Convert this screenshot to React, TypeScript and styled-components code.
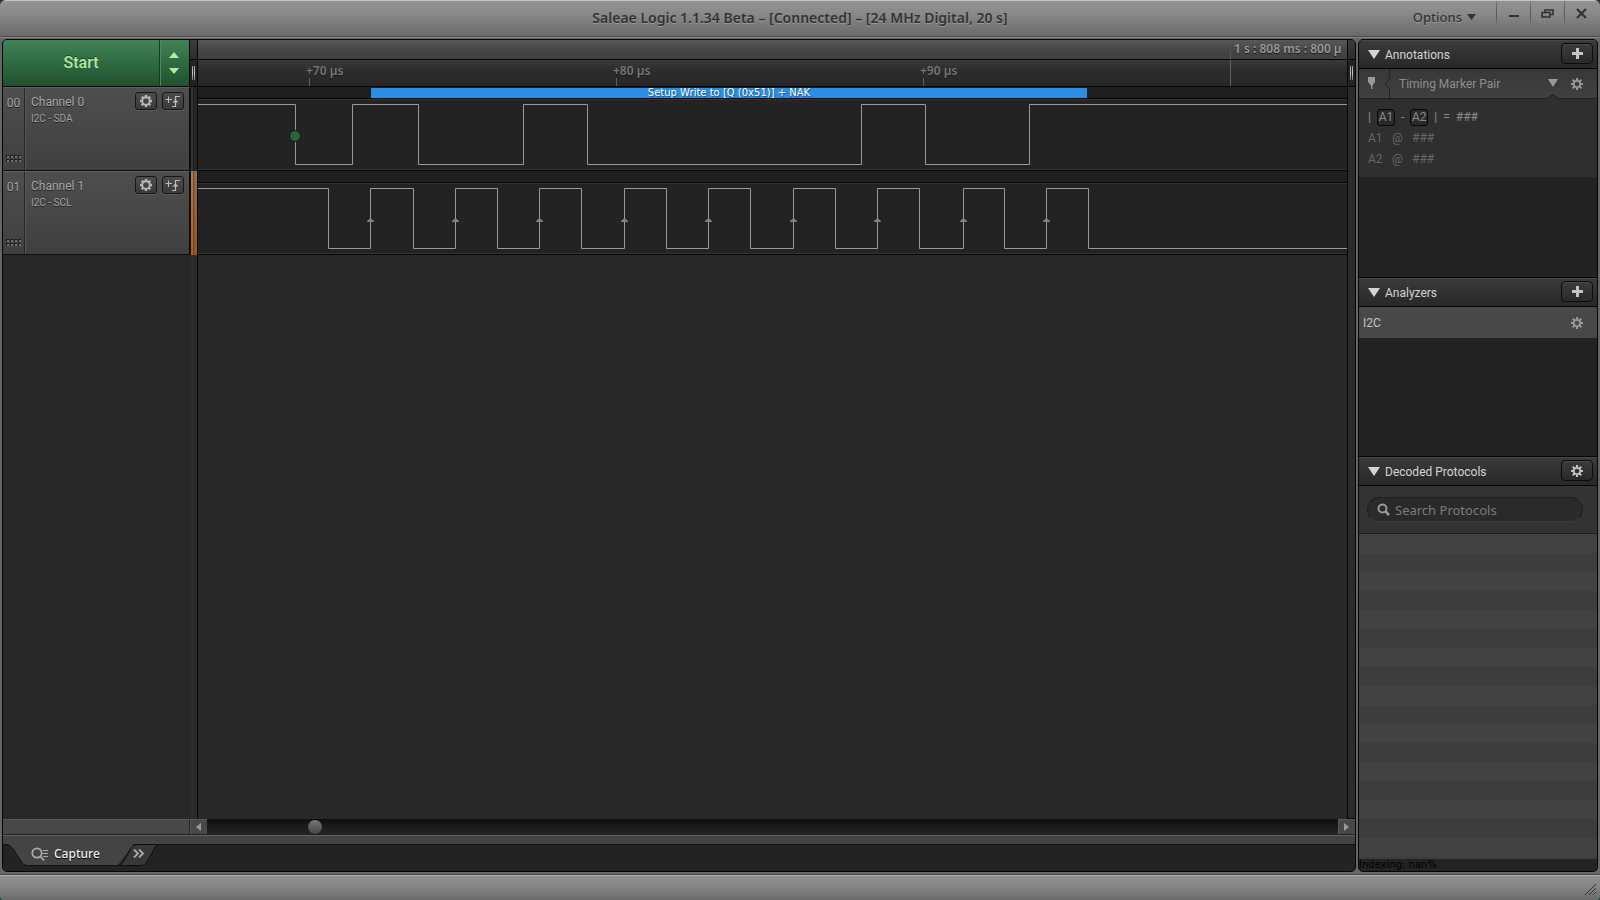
import React from "react";
import styled, { createGlobalStyle, css } from "styled-components";

const ui = `Roboto, "Liberation Sans", sans-serif`;
const humanist = `"Noto Sans", "Open Sans", sans-serif`;
const wide = `"DejaVu Sans", sans-serif`;

const Global = createGlobalStyle`
  *, *::before, *::after { box-sizing: border-box; }
  html, body { margin: 0; height: 100%; background: #12402f; }
  #root { height: 100%; }
  button, input { font: inherit; color: inherit; }
  button { margin: 0; padding: 0; border: 0; background: none; cursor: default; }
  h1, h2, p { margin: 0; font-weight: 400; }
  svg { display: block; }
`;

const Window = styled.div`
  height: 100vh;
  min-height: 600px;
  display: flex;
  flex-direction: column;
  background: #666;
  border-radius: 6px 6px 4px 4px;
  overflow: hidden;
  font: 12px/16px ${ui};
  color: #aaa;
`;

/* ---------- title bar ---------- */

const TitleBar = styled.header`
  flex: none;
  height: 37px;
  display: grid;
  grid-template-columns: 1fr auto 1fr;
  border-top: 1px solid #bfc4c0;
  border-bottom: 1px solid #4c4c4c;
  background: linear-gradient(#949494, #888 40%, #696969);
`;

const Title = styled.h1`
  grid-column: 2;
  font: 600 14px/18px ${humanist};
  padding-top: 8px;
  color: #333;
  text-shadow: 0 1px 0 #999;
`;

const WindowTools = styled.div`
  display: flex;
  justify-content: flex-end;
  padding-right: 2px;
`;

const OptionsButton = styled.button`
  height: 32px;
  display: flex;
  align-items: center;
  gap: 5px;
  margin-right: 20px;
  font: 500 13px/18px ${humanist};
  color: #333;
  text-shadow: 0 1px 0 #999;
`;

const WindowButton = styled.button`
  width: 34px;
  height: 24px;
  display: flex;
  align-items: center;
  justify-content: center;
  color: #333;
  border-left: 1px solid;
  border-image: linear-gradient(#777, #565656 60%, #777) 1;
`;

/* ---------- body ---------- */

const Body = styled.main`
  flex: 1;
  min-height: 0;
  display: flex;
  gap: 2px;
  padding: 1px 2px 2px;
  border-top: 1px solid #858585;
  border-bottom: 1px solid #4c4c4c;
`;

const MainPanel = styled.section`
  flex: 1;
  min-width: 0;
  display: flex;
  flex-direction: column;
  border: 1px solid #060606;
  border-radius: 5px;
  background: #282828;
  overflow: hidden;
`;

const TopRow = styled.div`
  flex: 1;
  min-height: 0;
  display: flex;
`;

const ChannelColumn = styled.div`
  flex: none;
  width: 187px;
`;

const StartBar = styled.div`
  height: 47px;
  display: flex;
  border-right: 1px solid #0a0a0a;
  border-bottom: 1px solid #0a0a0a;
  background: linear-gradient(#418456, #2f6a41 50%, #234f30);
`;

const StartButton = styled.button`
  flex: 1;
  font: 500 16px/20px ${ui};
  color: #b4e8a4;
  border-right: 1px solid #183c22;
  text-shadow: 0 -1px 0 #1e4429;
`;

const StartMode = styled.button`
  width: 29px;
  display: flex;
  flex-direction: column;
  align-items: center;
  justify-content: center;
  gap: 10px;
  padding: 0 2px 1px 0;
  color: #b4e8a4;
  border-left: 1px solid #4a8a5d;
`;

const ChannelCard = styled.article`
  height: 84px;
  display: flex;
  border-top: 1px solid #606060;
  border-right: 1px solid #0a0a0a;
  border-bottom: 1px solid #101010;
  background: linear-gradient(#4e4e4e, #404040);
`;

const ChannelIndex = styled.div`
  width: 22px;
  display: flex;
  flex-direction: column;
  align-items: center;
  justify-content: space-between;
  padding: 7px 0 7px;
  border-right: 1px solid #262626;
  color: #a4a4a4;
  text-shadow: 0 1px 0 #222;
`;

const ChannelInfo = styled.div`
  flex: 1;
  padding: 6px 0 0 5px;
  border-left: 1px solid #575757;
  text-shadow: 0 1px 0 #222;
`;

const ChannelName = styled.h2`
  font: 12px/16px ${ui};
  color: #a8a8a8;
`;

const ChannelRole = styled.p`
  margin-top: 3px;
  font: 10px/12px ${ui};
  color: #a4a4a4;
`;

const ChannelActions = styled.div`
  display: flex;
  gap: 5px;
  padding: 4px 5px 0 0;
`;

const SmallButton = styled.button`
  width: 22px;
  height: 18px;
  display: flex;
  align-items: center;
  justify-content: center;
  border: 1px solid #161616;
  border-radius: 3px;
  background: linear-gradient(#4c4c4c, #3a3a3a);
  color: #bbb;
  box-shadow: 0 1px 0 #5a5a5a;
`;

const Splitter = styled.div<{ $side: "left" | "right" }>`
  flex: none;
  width: 8px;
  display: flex;
  flex-direction: column;
  background: #2b2b2b;
  border: solid #060606;
  border-width: ${(p) => (p.$side === "left" ? "0 1px 0 0" : "0 0 1px 1px")};
`;

const SplitterCap = styled.div`
  height: 20px;
  border-bottom: 1px solid #060606;
  background: linear-gradient(#3c3c3c, #2c2c2c);
`;

const SplitterGrip = styled.div`
  height: 27px;
  display: flex;
  gap: 1px;
  padding: 6px 0 6px 2px;
  border-bottom: 1px solid #060606;
  background: #222;
  &::before, &::after {
    content: "";
    width: 1px;
    background: linear-gradient(#999, #ccc, #777);
  }
`;

const SplitterFlag = styled.div<{ $on?: boolean }>`
  height: 84px;
  border-left: 1px solid #111;
  background: ${(p) =>
    p.$on
      ? "linear-gradient(90deg, transparent 2px, #0005 2px, #0005 3px, #0003 3px, #0001), linear-gradient(#aa7a55, #b0611f)"
      : "linear-gradient(90deg, #343434 2px, #1c1c1c 2px, #1c1c1c 3px, #262626 3px)"};
`;

const Timeline = styled.div`
  flex: 1;
  min-width: 0;
  overflow: hidden;
`;

const MajorRuler = styled.div`
  height: 20px;
  display: flex;
  border-bottom: 1px solid #060606;
  background: linear-gradient(#585858, #444 60%, #414141);
`;

const rulerText = css`
  font: 600 12px/14px ${humanist};
  text-shadow: 0 1px 0 #1a1a1a;
  white-space: nowrap;
`;

const MajorMark = styled.span`
  ${rulerText}
  flex: none;
  margin-left: 1032px;
  padding: 2px 0 0 3px;
  color: #999;
  border-left: 1px solid;
  border-image: linear-gradient(transparent 30%, #606060) 1;
`;

const MinorRuler = styled.div`
  height: 27px;
  display: flex;
  padding-left: 111px;
  border-bottom: 1px solid #060606;
  background: linear-gradient(#393939, #2a2a2a 50%, #282828);
`;

const MinorMark = styled.span<{ $full?: boolean }>`
  ${rulerText}
  flex: none;
  width: 307px;
  padding-top: 4px;
  text-indent: -3px;
  color: #767676;
  background: linear-gradient(#606060, #606060) 0 100% / 1px ${(p) => (p.$full ? "26px" : "8px")} no-repeat;
`;

const Lane = styled.div`
  height: 84px;
  background: #232323;
`;

const BubbleStrip = styled.div`
  height: 12px;
  padding-top: 1px;
  border-bottom: 1px solid #060606;
  background: #1e1e1e;
`;

const Bubble = styled.div`
  width: 716px;
  height: 10px;
  margin-left: 173px;
  overflow: hidden;
  background: #2b8ee3;
  color: #fff;
  font: 10px/10px ${wide};
  text-align: center;
  text-shadow: 1px 1px 1px #1a4f85;
`;

const WaveArea = styled.div`
  height: 72px;
  border-top: 1px solid #333;
  border-bottom: 1px solid #060606;
  box-shadow: inset 0 -1px 0 #333;
  svg { width: 100%; height: 70px; }
`;

const ScrollRow = styled.div`
  flex: none;
  height: 16px;
  display: flex;
  border-bottom: 1px solid #222;
`;

const ScrollCorner = styled.div`
  width: 187px;
  border-top: 1px solid #585858;
  border-right: 1px solid #222;
  background: #484848;
`;

const ScrollButton = styled.button`
  width: 17px;
  display: flex;
  align-items: center;
  justify-content: center;
  padding-right: 2px;
  background: #484848;
  border: solid #585858;
  border-width: 1px 0 0 1px;
  color: #999;
`;

const ScrollRange = styled.input`
  flex: 1;
  min-width: 0;
  margin: 0;
  height: 15px;
  appearance: none;
  background: linear-gradient(#111, #242424);
  &::-webkit-slider-thumb {
    appearance: none;
    width: 14px;
    height: 14px;
    border-radius: 50%;
    background: linear-gradient(#777, #454545);
    box-shadow: 0 0 1px #000;
  }
`;

const TabSeam = styled.div`
  flex: none;
  height: 9px;
  border-top: 1px solid #626262;
  background: #444;
`;

const TabBar = styled.nav`
  flex: none;
  height: 27px;
  display: flex;
  background: #232323;
  box-shadow: inset 0 1px 0 #111;
`;

const Tab = styled.button<{ $width: number }>`
  position: relative;
  width: ${(p) => p.$width}px;
  height: 22px;
  padding-bottom: 3px;
  font: 500 12px/18px ${humanist};
  color: #eee;
`;

const TabShape = styled.svg`
  position: absolute;
  left: 0;
  top: 0;
  overflow: visible;
`;

const TabLabel = styled.span<{ $indent: number }>`
  position: relative;
  height: 18px;
  display: flex;
  align-items: center;
  gap: 6px;
  padding-left: ${(p) => p.$indent}px;
  text-shadow: 0 1px 1px #000;
`;

/* ---------- side panel ---------- */

const SidePanel = styled.aside`
  flex: none;
  width: 240px;
  display: flex;
  flex-direction: column;
  border: 1px solid #060606;
  border-radius: 5px;
  background: #232323;
  overflow: hidden;
`;

const Section = styled.section<{ $height?: number }>`
  display: flex;
  flex-direction: column;
  ${(p) => (p.$height ? `flex: none; height: ${p.$height}px;` : "flex: 1; min-height: 0;")}
  & + & { border-top: 1px solid #060606; }
`;

const SectionHead = styled.header`
  flex: none;
  height: 29px;
  display: flex;
  align-items: center;
  gap: 5px;
  padding: 0 4px 0 9px;
  border-bottom: 1px solid #060606;
  background: linear-gradient(#3b3b3b, #282828);
  box-shadow: inset 0 1px 0 #484848;
  color: #d4d4d4;
`;

const SectionTitle = styled.h2`
  flex: 1;
  padding-top: 1px;
  font: 12px/16px ${ui};
`;

const HeadButton = styled.button`
  width: 32px;
  height: 21px;
  display: flex;
  align-items: center;
  justify-content: center;
  margin-bottom: 1px;
  border: 1px solid #0c0c0c;
  border-radius: 4px;
  background: linear-gradient(#3c3c3c, #292929);
  box-shadow: inset 0 1px 0 #484848;
  color: #c4c4c4;
`;

const IconButton = styled.button`
  display: flex;
  color: #999;
`;

const MarkerHead = styled.div`
  height: 29px;
  display: flex;
  align-items: center;
  padding-right: 14px;
  background: linear-gradient(#383838, #404040);
  color: #8f8f8f;
`;

const MarkerName = styled.span`
  flex: 1;
  padding-left: 8px;
`;

const MarkerMenu = styled.button`
  position: relative;
  width: 16px;
  height: 30px;
  display: flex;
  justify-content: center;
  margin-right: 10px;
  padding-top: 10px;
  color: #999;
`;

const MenuNotch = styled.svg`
  position: absolute;
  left: 0;
  bottom: 0;
`;

const MarkerBody = styled.div`
  height: 79px;
  padding: 9px 9px 0;
  border-top: 1px solid #1f1f1f;
  background: #2f2f2f;
  color: #666;
`;

const Formula = styled.div`
  display: flex;
  align-items: center;
  height: 18px;
  margin-bottom: 2px;
  gap: 6px;
  color: #8a8a8a;
`;

const MarkerChip = styled.button`
  width: 18px;
  height: 17px;
  border: 1px solid #080808;
  border-radius: 3px;
  background: #2a2a2a;
  font: 12px/15px ${ui};
`;

const Reading = styled.div`
  display: grid;
  grid-template-columns: 24px 20px 1fr;
  font: 12px/21px ${ui};
`;

const AnalyzerRow = styled.div`
  height: 31px;
  display: flex;
  align-items: center;
  justify-content: space-between;
  padding: 1px 14px 0 4px;
  background: #484848;
  color: #c4c4c4;
`;

const SearchArea = styled.div`
  height: 48px;
  padding: 11px 14px 11px 8px;
  border-bottom: 1px solid #1c1c1c;
  background: #333;
`;

const SearchBox = styled.label`
  height: 25px;
  display: flex;
  align-items: center;
  gap: 5px;
  padding: 0 9px;
  border: 1px solid #1e1e1e;
  border-bottom-color: #3a3a3a;
  border-radius: 13px;
  background: #2a2a2a;
  color: #999;
`;

const SearchInput = styled.input`
  flex: 1;
  min-width: 0;
  padding: 0;
  border: 0;
  outline: 0;
  background: none;
  font: 13px/18px ${humanist};
  &::placeholder { color: #7c7c7c; opacity: 1; }
`;

const ProtocolList = styled.div`
  flex: 1;
  min-height: 0;
  background: repeating-linear-gradient(#424242 0, #424242 19px, #3d3d3d 19px, #3d3d3d 38px);
`;

const IndexStatus = styled.p`
  flex: none;
  height: 12px;
  font: 10px/12px ${wide};
  color: #000;
`;

const StatusBar = styled.footer`
  flex: none;
  height: 25px;
  display: flex;
  align-items: center;
  justify-content: flex-end;
  padding: 2px 4px 0 0;
  border-top: 1px solid #aaa;
  background: linear-gradient(#909090, #838383 50%, #6a6a6a);
`;

/* ---------- drawings ---------- */

const TEETH = [0, 45, 90, 135, 180, 225, 270, 315];

function Gear({ size = 12, core = 3.2, ring = 1.8, tooth = 2 }) {
  return (
    <svg width={size} height={size} viewBox="-6 -6 12 12" fill="none" stroke="currentColor">
      <circle r={core} strokeWidth={ring} />
      {TEETH.map((a) => (
        <path key={a} d={`M0 ${-core - 0.5}V-6`} strokeWidth={tooth} transform={`rotate(${a})`} />
      ))}
    </svg>
  );
}

function Triangle({ w, h, up = false }: { w: number; h: number; up?: boolean }) {
  return (
    <svg width={w} height={h} fill="currentColor">
      <path d={up ? `M0 ${h}L${w / 2} 0L${w} ${h}Z` : `M0 0H${w}L${w / 2} ${h}Z`} />
    </svg>
  );
}

const Plus = () => (
  <svg width="11" height="11" stroke="currentColor" strokeWidth="3">
    <path d="M5.5 0V11M0 5.5H11" />
  </svg>
);

const TriggerIcon = () => (
  <svg width="16" height="12" fill="none" stroke="currentColor">
    <path d="M0.5 4.5H7M3.5 1.5V8" />
    <path d="M7 11.5H10.5V1.5H15" strokeWidth="1.2" />
    <path d="M7.5 7.5L10.5 4.5L13.5 7.5Z" fill="currentColor" stroke="none" />
  </svg>
);

const GripDots = () => (
  <svg width="15" height="8">
    {[0, 4, 8, 12].map((x) =>
      [0, 4].map((y) => (
        <g key={`${x}-${y}`}>
          <rect x={x} y={y} width="3" height="3" fill="#1c1c1c" />
          <rect x={x + 1} y={y + 1} width="2" height="2" fill="#707070" />
        </g>
      ))
    )}
  </svg>
);

/* Edge positions in pixels from the left of the timeline. */
const SDA = [97, 154, 220, 325, 389, 663, 727, 831];
const SCL = [130, 172, 215, 257, 299, 341, 383, 426, 468, 510, 552, 595, 637, 679, 721, 765, 806, 848, 890];
const HIGH = 4.5;
const LOW = 64.5;

function wavePath(edges: number[]) {
  let high = true;
  let d = `M-1 ${HIGH}`;
  edges.forEach((x) => {
    high = !high;
    d += `H${x + 0.5}V${high ? HIGH : LOW}`;
  });
  return d + "H9000";
}

function Wave({ edges, start, arrows }: { edges: number[]; start?: number; arrows?: boolean }) {
  return (
    <WaveArea>
      <svg>
        <path d={wavePath(edges)} fill="none" stroke="#999" />
        {arrows &&
          edges
            .filter((_, i) => i % 2 === 1)
            .map((x) => <path key={x} d={`M${x - 3} 38V37L${x} 34.5H${x + 1}L${x + 4} 37V38Z`} fill="#808080" />)}
        {start !== undefined && (
          <circle cx={start} cy="36" r="5.5" fill="#2b6239" stroke="#161616" />
        )}
      </svg>
    </WaveArea>
  );
}

const CHANNELS = [
  { id: "00", name: "Channel 0", role: "I2C - SDA" },
  { id: "01", name: "Channel 1", role: "I2C - SCL" },
];

export default function App() {
  return (
    <>
      <Global />
      <Window>
        <TitleBar>
          <Title>Saleae Logic 1.1.34 Beta – [Connected] – [24 MHz Digital, 20 s]</Title>
          <WindowTools>
            <OptionsButton>
              Options <Triangle w={9} h={6} />
            </OptionsButton>
            <WindowButton aria-label="Minimize">
              <svg width="10" height="10"><path d="M0 8H10" stroke="#333" strokeWidth="2" /></svg>
            </WindowButton>
            <WindowButton aria-label="Restore">
              <svg width="13" height="9" fill="none" stroke="#333" strokeWidth="1.6">
                <path d="M4 3V1H12V5.5H9.5" />
                <rect x="1" y="3.5" width="8" height="4.5" />
              </svg>
            </WindowButton>
            <WindowButton aria-label="Close">
              <svg width="11" height="11" stroke="#333" strokeWidth="2.2"><path d="M1 1L10 10M10 1L1 10" /></svg>
            </WindowButton>
          </WindowTools>
        </TitleBar>

        <Body>
          <MainPanel>
            <TopRow>
              <ChannelColumn>
                <StartBar>
                  <StartButton>Start</StartButton>
                  <StartMode aria-label="Capture settings">
                    <Triangle w={10} h={6} up />
                    <Triangle w={10} h={6} />
                  </StartMode>
                </StartBar>
                {CHANNELS.map((c) => (
                  <ChannelCard key={c.id}>
                    <ChannelIndex>
                      {c.id}
                      <GripDots />
                    </ChannelIndex>
                    <ChannelInfo>
                      <ChannelName>{c.name}</ChannelName>
                      <ChannelRole>{c.role}</ChannelRole>
                    </ChannelInfo>
                    <ChannelActions>
                      <SmallButton aria-label={`${c.name} settings`}>
                        <Gear size={12} core={3.8} ring={1.9} tooth={2.4} />
                      </SmallButton>
                      <SmallButton aria-label={`${c.name} trigger`}>
                        <TriggerIcon />
                      </SmallButton>
                    </ChannelActions>
                  </ChannelCard>
                ))}
              </ChannelColumn>
              <Splitter $side="left">
                <SplitterCap />
                <SplitterGrip />
                <SplitterFlag />
                <SplitterFlag $on />
              </Splitter>
              <Timeline>
                <MajorRuler>
                  <MajorMark>1 s : 808 ms : 800 µ</MajorMark>
                </MajorRuler>
                <MinorRuler>
                  <MinorMark>+70 µs</MinorMark>
                  <MinorMark>+80 µs</MinorMark>
                  <MinorMark>+90 µs</MinorMark>
                  <MinorMark $full />
                </MinorRuler>
                <Lane>
                  <BubbleStrip>
                    <Bubble>Setup Write to [Q (0x51)] + NAK</Bubble>
                  </BubbleStrip>
                  <Wave edges={SDA} start={97} />
                </Lane>
                <Lane>
                  <BubbleStrip />
                  <Wave edges={SCL} arrows />
                </Lane>
              </Timeline>
              <Splitter $side="right">
                <SplitterCap />
                <SplitterGrip />
              </Splitter>
            </TopRow>

            <ScrollRow>
              <ScrollCorner />
              <ScrollButton aria-label="Scroll left">
                <svg width="5" height="8" fill="currentColor"><path d="M5 0V8L0 4Z" /></svg>
              </ScrollButton>
              <ScrollRange type="range" min={0} max={1000} defaultValue={90} aria-label="Timeline position" />
              <ScrollButton aria-label="Scroll right">
                <svg width="5" height="8" fill="currentColor"><path d="M0 0V8L5 4Z" /></svg>
              </ScrollButton>
            </ScrollRow>
            <TabSeam />
            <TabBar>
              <Tab $width={115}>
                <TabShape width="130" height="23">
                  <path d="M0 0C7 0 9 3 12 8L18 17C20 20 21 21 24 21H115L131 0Z" fill="#444" />
                  <path d="M0 0.5C7 0.5 9 3 12 8L18 17C20 20 21 21.5 24 21.5H115" fill="none" stroke="#111" />
                </TabShape>
                <TabLabel $indent={28}>
                  <svg width="17" height="14" fill="none" stroke="#aaa">
                    <circle cx="6" cy="6" r="4.7" strokeWidth="1.8" />
                    <path d="M9 9L13 13.5" strokeWidth="1.8" />
                    <path d="M12 3.5H17M12 6.5H17M12 9.5H17" />
                  </svg>
                  Capture
                </TabLabel>
              </Tab>
              <Tab $width={42} aria-label="More tabs">
                <TabShape width="42" height="23">
                  <path d="M0 21.5C4 21 5 18 7 15L12 6C14 2 16 0.5 20 0.5H40.5C37 2 36 5 34 9L30 16C28 20 26 21.5 22 21.5Z" fill="#383838" stroke="#0c0c0c" />
                </TabShape>
                <TabLabel $indent={15}>
                  <svg width="12" height="9" fill="none" stroke="#aaa" strokeWidth="1.8">
                    <path d="M1 0.5L5 4.5L1 8.5M6 0.5L10 4.5L6 8.5" />
                  </svg>
                </TabLabel>
              </Tab>
            </TabBar>
          </MainPanel>

          <SidePanel>
            <Section $height={237}>
              <SectionHead>
                <Triangle w={12} h={9} />
                <SectionTitle>Annotations</SectionTitle>
                <HeadButton aria-label="Add annotation"><Plus /></HeadButton>
              </SectionHead>
              <MarkerHead>
                <svg width="32" height="29">
                  <path d="M9 8H16V13L13.4 16.5V20H12V16.5L9 13Z" fill="#999" />
                  <path d="M30.5 0V9L26.5 14.5L30.5 20V29" fill="none" stroke="#222" />
                </svg>
                <MarkerName>Timing Marker Pair</MarkerName>
                <MarkerMenu aria-label="Marker menu">
                  <Triangle w={10} h={8} />
                  <MenuNotch width="16" height="5">
                    <path d="M0 4.5L2 4.5L8 0.5L14 4.5L16 4.5V5H0Z" fill="#2f2f2f" />
                    <path d="M0 4.5H2L8 0.5L14 4.5H16" fill="none" stroke="#1f1f1f" />
                  </MenuNotch>
                </MarkerMenu>
                <IconButton aria-label="Marker settings"><Gear /></IconButton>
              </MarkerHead>
              <MarkerBody>
                <Formula>
                  <span>|</span>
                  <MarkerChip>A1</MarkerChip>
                  <span>-</span>
                  <MarkerChip>A2</MarkerChip>
                  <span>|</span>
                  <span>=</span>
                  <span>###</span>
                </Formula>
                <Reading><span>A1</span><span>@</span><span>###</span></Reading>
                <Reading><span>A2</span><span>@</span><span>###</span></Reading>
              </MarkerBody>
            </Section>

            <Section $height={179}>
              <SectionHead>
                <Triangle w={12} h={9} />
                <SectionTitle>Analyzers</SectionTitle>
                <HeadButton aria-label="Add analyzer"><Plus /></HeadButton>
              </SectionHead>
              <AnalyzerRow>
                I2C
                <IconButton aria-label="I2C settings"><Gear /></IconButton>
              </AnalyzerRow>
            </Section>

            <Section>
              <SectionHead>
                <Triangle w={12} h={9} />
                <SectionTitle>Decoded Protocols</SectionTitle>
                <HeadButton aria-label="Protocol settings"><Gear /></HeadButton>
              </SectionHead>
              <SearchArea>
                <SearchBox>
                  <svg width="13" height="13" fill="none" stroke="currentColor" strokeWidth="2">
                    <circle cx="5.5" cy="5.5" r="4" />
                    <path d="M8.5 8.5L12 12" strokeWidth="2.6" />
                  </svg>
                  <SearchInput type="text" placeholder="Search Protocols" aria-label="Search Protocols" />
                </SearchBox>
              </SearchArea>
              <ProtocolList />
              <IndexStatus>Indexing: nan%</IndexStatus>
            </Section>
          </SidePanel>
        </Body>

        <StatusBar>
          <svg width="11" height="11" stroke="#333"><path d="M0 11L11 0M4 11L11 4M8 11L11 8" /></svg>
        </StatusBar>
      </Window>
    </>
  );
}
